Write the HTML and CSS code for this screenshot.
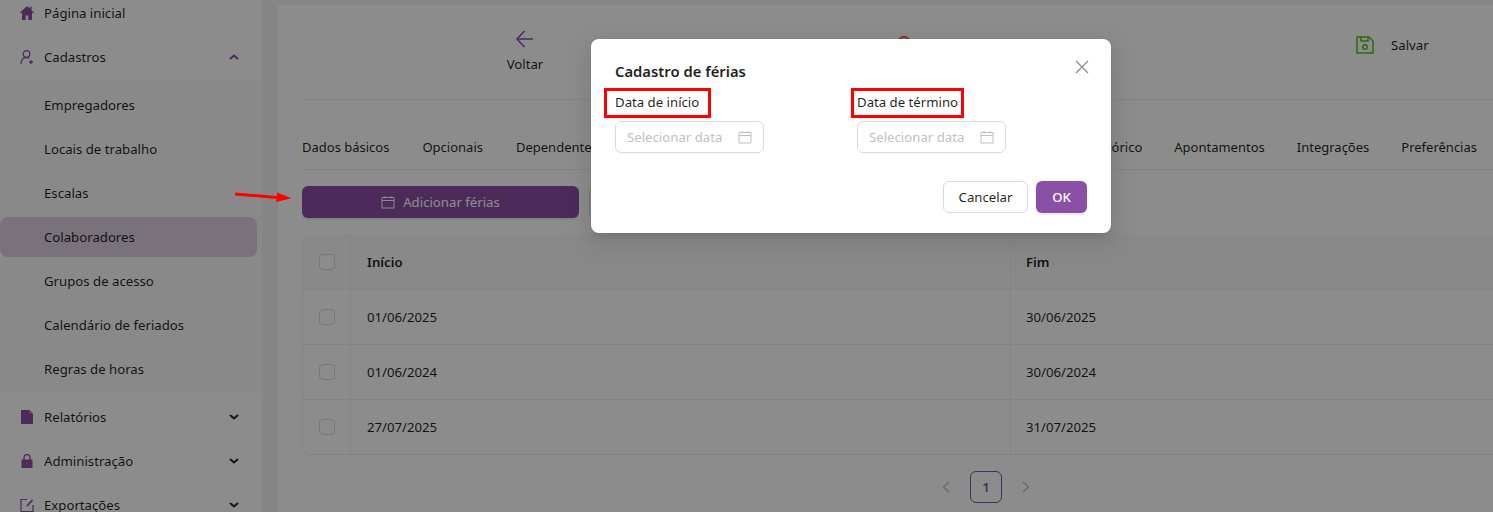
FILE: index.html
```html
<!DOCTYPE html>
<html lang="pt-BR">

<head>
  <meta charset="UTF-8">
  <meta name="viewport" content="width=device-width, initial-scale=1.0">
  <title>Cadastro de férias</title>
  <link rel="stylesheet" href="styles.css">
</head>

<body>
  <div class="layout">
    <aside class="sidebar">
      <div class="menu-item">
        <svg class="menu-icon" viewBox="0 0 14 14"><path fill="#8a4fa6" d="M7 0 0 6.600l.8.9L2 6.500V14h3.700V9.500h2.600V14H12V6.500l1.200 1 .8-.9-2.400-2.300V.8H9.800v1.800z"/></svg>
        <span>Página inicial</span>
      </div>
      <div class="menu-item">
        <svg class="menu-icon" viewBox="0 0 14 14" fill="none" stroke="#8a4fa6" stroke-width="1.300"><circle cx="6.500" cy="4" r="3.300"/><path d="M1 14c0-3.600 1.800-6.500 5.500-6.500 1 0 2 .3 2.800.8M11 10v4M9 12h4"/></svg>
        <span>Cadastros</span>
        <svg class="chevron" viewBox="0 0 10 6"><path d="M1 5l4-3.500L9 5" fill="none" stroke="#8a4fa6" stroke-width="2"/></svg>
      </div>
      <div class="submenu">
        <div class="menu-item sub">Empregadores</div>
        <div class="menu-item sub">Locais de trabalho</div>
        <div class="menu-item sub">Escalas</div>
        <div class="menu-item sub selected">Colaboradores</div>
        <div class="menu-item sub">Grupos de acesso</div>
        <div class="menu-item sub">Calendário de feriados</div>
        <div class="menu-item sub">Regras de horas</div>
      </div>
      <div class="menu-item">
        <svg class="menu-icon" viewBox="0 0 14 14"><path fill="#8a4fa6" d="M1 0h8.500L13 3.500V14H1z"/><path fill="#c9a8d8" d="M9.500 1v2.500H12z"/></svg>
        <span>Relatórios</span>
        <svg class="chevron" viewBox="0 0 10 6"><path d="M1 1l4 3.500L9 1" fill="none" stroke="#262626" stroke-width="2"/></svg>
      </div>
      <div class="menu-item">
        <svg class="menu-icon" viewBox="0 0 14 14"><path fill="none" stroke="#8a4fa6" stroke-width="1.300" d="M4 6V3.500a3 3 0 0 1 6 0V6"/><path fill="#8a4fa6" d="M1.500 5.500h11V14h-11z"/><circle cx="7" cy="10" r=".8" fill="#c9a8d8"/></svg>
        <span>Administração</span>
        <svg class="chevron" viewBox="0 0 10 6"><path d="M1 1l4 3.500L9 1" fill="none" stroke="#262626" stroke-width="2"/></svg>
      </div>
      <div class="menu-item">
        <svg class="menu-icon" viewBox="0 0 14 14" fill="none" stroke="#8a4fa6" stroke-width="1.200"><path d="M7 1.500H1v12h12V7"/><path d="M7 8 12.500 2" stroke-width="1.800"/></svg>
        <span>Exportações</span>
        <svg class="chevron" viewBox="0 0 10 6"><path d="M1 1l4 3.500L9 1" fill="none" stroke="#262626" stroke-width="2"/></svg>
      </div>
    </aside>

    <main class="card">
      <div class="toolbar">
        <div class="tool tool-back">
          <svg class="tool-icon" viewBox="0 0 20 20" fill="none" stroke="#8a4fa6" stroke-width="1.500"><path d="M18 10H2.500M9.500 2 2 10l7.500 8"/></svg>
          <span>Voltar</span>
        </div>
        <div class="tool tool-delete">
          <svg class="tool-icon" viewBox="0 0 20 20" fill="none" stroke="#ff4d4f" stroke-width="2"><circle cx="10" cy="10" r="6"/></svg>
          <span>Excluir</span>
        </div>
        <div class="tool tool-save">
          <svg class="save-icon" viewBox="0 0 18 18" fill="none" stroke="#52c41a" stroke-width="1.500"><path d="M1 1h12l4 4v12H1z"/><path d="M5 1v4h7V1"/><circle cx="9" cy="11" r="2.300"/></svg>
          <span>Salvar</span>
        </div>
      </div>

      <div class="tabs">
        <div class="tab-group tab-group-left">
          <span>Dados básicos</span>
          <span>Opcionais</span>
          <span>Dependentes</span>
        </div>
        <div class="tab-group">
          <span>Histórico</span>
          <span>Apontamentos</span>
          <span>Integrações</span>
          <span>Preferências</span>
        </div>
      </div>

      <div class="actions">
        <button type="button" class="btn-add">
          <svg class="cal-icon" viewBox="0 0 14 14" fill="none" stroke="currentColor"><path d="M1 2.500h12v10.500H1zM1 5.500h12M4 1v2.500M10 1v2.500"/></svg>
          Adicionar férias
        </button>
        <button type="button" class="btn-other"></button>
      </div>

      <table class="vacations">
        <tr>
          <th class="check-col"><span class="checkbox"></span></th>
          <th class="start-col">Início</th>
          <th class="end-col">Fim</th>
        </tr>
        <tr>
          <td class="check-col"><span class="checkbox"></span></td>
          <td>01/06/2025</td>
          <td class="end-col">30/06/2025</td>
        </tr>
        <tr>
          <td class="check-col"><span class="checkbox"></span></td>
          <td>01/06/2024</td>
          <td class="end-col">30/06/2024</td>
        </tr>
        <tr>
          <td class="check-col"><span class="checkbox"></span></td>
          <td>27/07/2025</td>
          <td class="end-col">31/07/2025</td>
        </tr>
      </table>

      <div class="pagination">
        <svg class="page-arrow" viewBox="0 0 8 12"><path d="M7 1 1.500 6 7 11" fill="none" stroke="#bbb" stroke-width="1.200"/></svg>
        <span class="page-current">1</span>
        <svg class="page-arrow" viewBox="0 0 8 12"><path d="M1 1l5.500 5L1 11" fill="none" stroke="#bbb" stroke-width="1.200"/></svg>
      </div>
    </main>
  </div>

  <div class="mask"></div>

  <!-- seta vermelha da anotacao -->
  <svg class="note-arrow" viewBox="0 0 60 14"><path d="M0 1.500 42 5 42 1.500 56.500 7.200 41 11 41.500 8 0 4.500z" fill="#ff0000"/></svg>

  <section class="modal">
    <svg class="modal-close" viewBox="0 0 14 14"><path d="M1 1l12 12M13 1 1 13" fill="none" stroke="#8c8c8c" stroke-width="1.300"/></svg>
    <h2 class="modal-title">Cadastro de férias</h2>
    <div class="fields">
      <div class="field">
        <label class="field-label">Data de início</label>
        <div class="date-input">
          <span>Selecionar data</span>
          <svg class="cal-icon" viewBox="0 0 14 14" fill="none" stroke="#bfbfbf"><path d="M1 2.500h12v10.500H1zM1 5.500h12M4 1v2.500M10 1v2.500"/></svg>
        </div>
      </div>
      <div class="field">
        <label class="field-label">Data de término</label>
        <div class="date-input">
          <span>Selecionar data</span>
          <svg class="cal-icon" viewBox="0 0 14 14" fill="none" stroke="#bfbfbf"><path d="M1 2.500h12v10.500H1zM1 5.500h12M4 1v2.500M10 1v2.500"/></svg>
        </div>
      </div>
    </div>
    <div class="modal-footer">
      <button type="button" class="btn-cancel">Cancelar</button>
      <button type="button" class="btn-ok">OK</button>
    </div>
    <!-- marcacoes vermelhas -->
    <div class="mark mark-start"></div>
    <div class="mark mark-end"></div>
  </section>
</body>

</html>
```

FILE: styles.css
```css
* {
  box-sizing: border-box;
}

html,
body {
  height: 100%;
  margin: 0;
  overflow: hidden;
}

body {
  position: relative;
  font-family: "Noto Sans", "Open Sans", sans-serif;
  font-size: 13.2px;
  color: rgba(0, 0, 0, 0.88);
  background: #f5f5f5;
}

.layout {
  display: flex;
  align-items: flex-start;
  height: 100%;
}

/* menu lateral */
.sidebar {
  flex: none;
  display: flex;
  flex-direction: column;
  gap: 4px;
  width: 262px;
  height: 560px;
  margin-top: -7px;
  background: #fff;
}

.menu-item {
  display: flex;
  align-items: center;
  flex: none;
  height: 40px;
  padding-left: 20px;
  border-radius: 8px;
}

.menu-item.sub {
  padding-left: 44px;
  width: 257px;
}

.menu-item.selected {
  background: #dccfe0;
}

.menu-icon {
  width: 14px;
  height: 14px;
  margin-right: 10px;
}

.chevron {
  width: 10px;
  height: 6px;
  margin-left: auto;
  margin-right: 23px;
}

.submenu {
  display: flex;
  flex-direction: column;
  gap: 4px;
  padding: 4px 0;
  background: #fafafa;
}

/* conteudo */
.card {
  flex: 1;
  min-width: 0;
  height: 560px;
  margin: 5px 0 0 16px;
  padding-left: 24px;
  background: #fff;
  overflow: hidden;
}

.toolbar {
  display: flex;
  align-items: center;
  height: 95px;
  border-bottom: 1px solid #f0f0f0;
}

.tool {
  display: flex;
  flex-direction: column;
  align-items: center;
  flex: none;
}

.tool-back {
  width: 44px;
  margin-left: 201px;
  margin-top: -2px;
}

.tool-delete {
  width: 44px;
  margin-left: 335px;
  margin-top: 6px;
}

.tool-save {
  flex-direction: row;
  gap: 17px;
  margin-left: 430px;
  margin-top: -15px;
}

.tool-icon {
  width: 20px;
  height: 20px;
  margin-bottom: 6px;
}

.save-icon {
  width: 18px;
  height: 18px;
}

.tabs {
  display: flex;
  justify-content: space-between;
  margin-top: 22px;
  padding: 15px 16px 12px 0;
  font-size: 13px;
  line-height: 20px;
  border-bottom: 1px solid #f0f0f0;
}

.tab-group {
  display: flex;
  gap: 32px;
}

.tab-group-left {
  gap: 33px;
}

.actions {
  display: flex;
  gap: 10px;
  margin-top: 16px;
}

.btn-add {
  display: flex;
  align-items: center;
  justify-content: center;
  gap: 8px;
  width: 277px;
  height: 32px;
  border: 0;
  border-radius: 6px;
  background: #8a4fa6;
  box-shadow: 0 2px 0 rgba(120, 60, 150, 0.1);
  color: #fff;
  font: inherit;
}

.btn-other {
  width: 200px;
  height: 32px;
  border: 1px solid #d9d9d9;
  border-radius: 6px;
  background: #fff;
}

.cal-icon {
  width: 14px;
  height: 14px;
  flex: none;
}

.vacations {
  width: 1240px;
  margin-top: 16px;
  border-collapse: separate;
  border-spacing: 0;
  table-layout: fixed;
}

.vacations th,
.vacations td {
  height: 55px;
  padding: 0 16px;
  text-align: left;
  border-bottom: 1px solid #f0f0f0;
  border-right: 1px solid #f0f0f0;
}

.vacations th {
  height: 56px;
  background: #fafafa;
  font-weight: 600;
}

.vacations tr:first-child th:first-child {
  border-top-left-radius: 8px;
}

.vacations tr th:first-child,
.vacations tr td:first-child {
  border-left: 1px solid #f0f0f0;
}

.vacations tr:last-child td:first-child {
  border-bottom-left-radius: 8px;
}

.vacations .end-col {
  padding-left: 15px;
}

.check-col {
  width: 49px;
}

.start-col {
  width: 660px;
}

.checkbox {
  display: block;
  width: 16px;
  height: 16px;
  border: 1px solid #d9d9d9;
  border-radius: 4px;
  background: #fff;
}

.pagination {
  display: flex;
  align-items: center;
  justify-content: center;
  gap: 20px;
  width: 1368px;
  margin-top: 16px;
}

.page-arrow {
  width: 8px;
  height: 12px;
}

.page-current {
  display: flex;
  align-items: center;
  justify-content: center;
  width: 32px;
  height: 32px;
  border: 1px solid #8a4fa6;
  border-radius: 6px;
  color: #8a4fa6;
  font-weight: 600;
}

/* fundo escuro e janela */
.mask {
  position: absolute;
  inset: 0;
  background: rgba(0, 0, 0, 0.45);
}

.note-arrow {
  position: absolute;
  left: 235px;
  top: 191px;
  width: 60px;
  height: 14px;
}

.modal {
  position: absolute;
  left: 591px;
  top: 39px;
  width: 520px;
  height: 194px;
  padding: 20px 24px;
  border-radius: 8px;
  background: #fff;
  box-shadow: 0 6px 16px rgba(0, 0, 0, 0.08), 0 3px 6px -4px rgba(0, 0, 0, 0.12), 0 9px 28px 8px rgba(0, 0, 0, 0.05);
}

.modal-close {
  position: absolute;
  right: 22px;
  top: 21px;
  width: 14px;
  height: 14px;
}

.modal-title {
  margin: 0;
  font-size: 14.8px;
  font-weight: 600;
  line-height: 24px;
}

.fields {
  display: flex;
  gap: 93px;
}

.field {
  width: 149px;
}

.field-label {
  display: block;
  height: 20px;
  margin-top: 9px;
  line-height: 20px;
  white-space: nowrap;
}

.date-input {
  display: flex;
  align-items: center;
  justify-content: space-between;
  width: 149px;
  height: 32px;
  margin-top: 9px;
  padding: 0 11px;
  border: 1px solid #d9d9d9;
  border-radius: 6px;
  color: #bfbfbf;
}

.modal-footer {
  display: flex;
  justify-content: flex-end;
  gap: 8px;
  margin-top: 28px;
}

.btn-cancel,
.btn-ok {
  height: 32px;
  border-radius: 6px;
  font: inherit;
}

.btn-cancel {
  width: 85px;
  border: 1px solid #d9d9d9;
  background: #fff;
  color: rgba(0, 0, 0, 0.88);
}

.btn-ok {
  width: 51px;
  border: 0;
  background: #8a4fa6;
  box-shadow: 0 2px 0 rgba(120, 60, 150, 0.1);
  color: #fff;
  font-weight: 500;
}

.mark {
  position: absolute;
  top: 49px;
  height: 30px;
  border: 3px solid #ff0000;
}

.mark-start {
  left: 13px;
  width: 107px;
}

.mark-end {
  left: 260px;
  width: 113px;
}
```
